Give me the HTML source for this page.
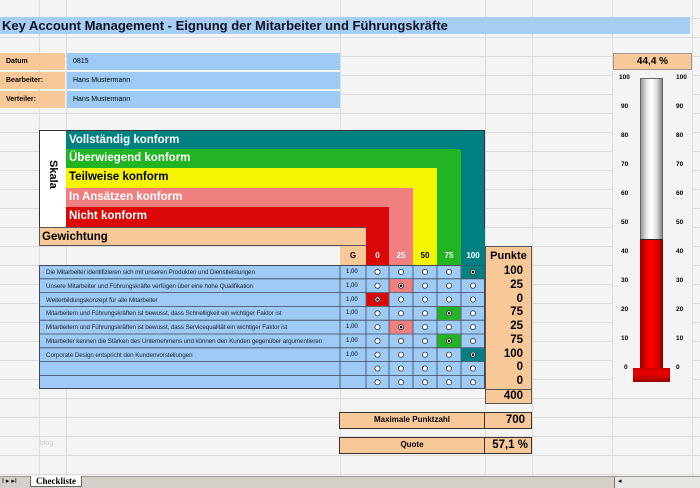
<!DOCTYPE html><html><head><meta charset="utf-8"><style>
*{margin:0;padding:0;box-sizing:border-box}
body{width:700px;height:488px;overflow:hidden;position:relative;background:#f4f4f4;font-family:"Liberation Sans",Arial,sans-serif;
background-image:repeating-linear-gradient(to bottom,transparent 0,transparent 18px,#dcdcdc 18px,#dcdcdc 19px);}
.a{position:absolute}
.vl{position:absolute;top:0;height:476px;width:1px;background:#dcdcdc}
.b{font-weight:bold}
.bar{position:absolute;left:66px;color:#fff;font-weight:bold;font-size:11.5px;padding-left:3px;line-height:19px}
.t{font-size:6.3px;color:#223;position:absolute;left:46px;letter-spacing:-.1px}
.g{font-size:6px;position:absolute;left:346px}
.p{position:absolute;left:485px;width:47px;text-align:right;padding-right:9px;font-weight:bold;font-size:11.5px}
.sl{position:absolute;font-size:6.5px;font-weight:bold}
</style></head><body>
<div class="vl" style="left:39px"></div><div class="vl" style="left:66px"></div><div class="vl" style="left:340px"></div><div class="vl" style="left:485px"></div><div class="vl" style="left:532px"></div><div class="vl" style="left:612px"></div><div class="vl" style="left:692px"></div>
<div class="a b" style="left:0;top:17px;width:690px;height:17px;background:#a6cdf4;font-size:13px;padding-left:2px;line-height:17px;color:#112">Key Account Management - Eignung der Mitarbeiter und Führungskräfte</div>
<div class="a b" style="left:0;top:53px;width:65px;height:17px;background:#f8c898;font-size:7px;padding:5px 6px">Datum</div>
<div class="a b" style="left:0;top:72px;width:65px;height:17px;background:#f8c898;font-size:7px;padding:5px 6px">Bearbeiter:</div>
<div class="a b" style="left:0;top:91px;width:65px;height:17px;background:#f8c898;font-size:7px;padding:5px 6px">Verteiler:</div>
<div class="a" style="left:67px;top:53px;width:273px;height:17px;background:#9dcbf5;font-size:7px;padding:5px 6px">0815</div>
<div class="a" style="left:67px;top:72px;width:273px;height:17px;background:#9dcbf5;font-size:7px;padding:5px 6px">Hans Mustermann</div>
<div class="a" style="left:67px;top:91px;width:273px;height:17px;background:#9dcbf5;font-size:7px;padding:5px 6px">Hans Mustermann</div>
<div class="a" style="left:39px;top:130px;width:27px;height:98px;background:#fff;border:1px solid #333;border-right:none"></div>
<div class="a b" style="left:40px;top:160px;width:26px;font-size:11px;writing-mode:vertical-rl;line-height:26px">Skala</div>
<div class="bar" style="top:130px;width:419px;height:98px;background:#008080;border-top:1px solid #333;border-right:1px solid #333">Vollständig konform</div>
<div class="bar" style="top:149px;width:395px;height:79px;background:#22b422">Überwiegend konform</div>
<div class="bar" style="top:168px;width:371px;height:60px;background:#f5f500;color:#000">Teilweise konform</div>
<div class="bar" style="top:188px;width:347px;height:40px;background:#f08080">In Ansätzen konform</div>
<div class="bar" style="top:207px;width:323px;height:21px;background:#dc0808">Nicht konform</div>
<div class="a b" style="left:39px;top:227px;width:327px;height:19px;background:#f8c898;border:1px solid #555;border-right:none;font-size:11.5px;padding-left:2px;line-height:18px">Gewichtung</div>
<div class="a" style="left:366px;top:228px;width:23px;height:18px;background:#dc0808"></div>
<div class="a" style="left:389px;top:228px;width:24px;height:18px;background:#f08080"></div>
<div class="a" style="left:413px;top:228px;width:24px;height:18px;background:#f5f500"></div>
<div class="a" style="left:437px;top:228px;width:24px;height:18px;background:#22b422"></div>
<div class="a" style="left:461px;top:228px;width:24px;height:18px;background:#008080"></div>
<div class="a b" style="top:246px;left:340px;width:26px;height:19px;background:#f8c898;font-size:8px;text-align:center;line-height:19px">G</div>
<div class="a b" style="top:246px;left:366px;width:23px;height:19px;background:#dc0808;color:#fff;font-size:8px;text-align:center;line-height:19px">0</div>
<div class="a b" style="top:246px;left:389px;width:24px;height:19px;background:#f08080;color:#fff;font-size:8px;text-align:center;line-height:19px">25</div>
<div class="a b" style="top:246px;left:413px;width:24px;height:19px;background:#f5f500;font-size:8px;text-align:center;line-height:19px">50</div>
<div class="a b" style="top:246px;left:437px;width:24px;height:19px;background:#22b422;color:#fff;font-size:8px;text-align:center;line-height:19px">75</div>
<div class="a b" style="top:246px;left:461px;width:24px;height:19px;background:#008080;color:#fff;font-size:8px;text-align:center;line-height:19px">100</div>
<div class="a b" style="top:246px;left:485px;width:47px;height:158px;background:#f8c898;border:1px solid #555;font-size:11px;text-align:center;line-height:18px">Punkte</div>
<div class="a" style="left:39px;top:265px;width:446px;height:124px;background:#9dcbf5;border:1px solid #445"></div>
<svg class="a" style="left:39px;top:265px" width="446" height="124">
<g stroke="#445" stroke-width="0.8">
<line x1="0" x2="446" y1="13.8" y2="13.8"/><line x1="0" x2="446" y1="27.6" y2="27.6"/><line x1="0" x2="446" y1="41.4" y2="41.4"/><line x1="0" x2="446" y1="55.2" y2="55.2"/><line x1="0" x2="446" y1="69" y2="69"/><line x1="0" x2="446" y1="82.8" y2="82.8"/><line x1="0" x2="446" y1="96.6" y2="96.6"/><line x1="0" x2="446" y1="110.4" y2="110.4"/>
<line x1="301" x2="301" y1="0" y2="124"/><line x1="327" x2="327" y1="0" y2="124"/><line x1="350" x2="350" y1="0" y2="124"/><line x1="374" x2="374" y1="0" y2="124"/><line x1="398" x2="398" y1="0" y2="124"/><line x1="422" x2="422" y1="0" y2="124"/></g>
<rect x="422.5" y="0.5" width="23" height="13" fill="#008080"/>
<rect x="350.5" y="14.2" width="23" height="13" fill="#f08080"/>
<rect x="327.5" y="28" width="22" height="13" fill="#dc0808"/>
<rect x="398.5" y="41.8" width="23" height="13" fill="#22b422"/>
<rect x="350.5" y="55.6" width="23" height="13" fill="#f08080"/>
<rect x="398.5" y="69.4" width="23" height="13" fill="#22b422"/>
<rect x="422.5" y="83.2" width="23" height="13" fill="#008080"/>
<g fill="#fff" stroke="#333" stroke-width="0.8">
<g id="r"><circle cx="338.5" cy="6.9" r="2.6"/><circle cx="362" cy="6.9" r="2.6"/><circle cx="386" cy="6.9" r="2.6"/><circle cx="410" cy="6.9" r="2.6"/><circle cx="434" cy="6.9" r="2.6"/></g>
<use href="#r" y="13.8"/><use href="#r" y="27.6"/><use href="#r" y="41.4"/><use href="#r" y="55.2"/><use href="#r" y="69"/><use href="#r" y="82.8"/><use href="#r" y="96.6"/><use href="#r" y="110.4"/></g>
<g fill="#111"><circle cx="434" cy="6.9" r="1.3"/><circle cx="362" cy="20.7" r="1.3"/><circle cx="338.5" cy="34.5" r="1.3"/><circle cx="410" cy="48.3" r="1.3"/><circle cx="362" cy="62.1" r="1.3"/><circle cx="410" cy="75.9" r="1.3"/><circle cx="434" cy="89.7" r="1.3"/></g>
</svg>
<div class="t" style="top:269px">Die Mitarbeiter identifizieren sich mit unseren Produkten und Dienstleistungen</div>
<div class="t" style="top:283px">Unsere Mitarbeiter und Führungskräfte verfügen über eine hohe Qualifikation</div>
<div class="t" style="top:297px">Weiterbildungskonzept für alle Mitarbeiter</div>
<div class="t" style="top:310px">Mitarbeitern und Führungskräften ist bewusst, dass Schnelligkeit ein wichtiger Faktor ist</div>
<div class="t" style="top:324px">Mitarbeitern und Führungskräften ist bewusst, dass Servicequalität ein wichtiger Faktor ist</div>
<div class="t" style="top:338px;width:294px;overflow:hidden;white-space:nowrap">Mitarbeiter kennen die Stärken des Unternehmens und können den Kunden gegenüber argumentieren</div>
<div class="t" style="top:352px">Corporate Design entspricht den Kundenvorstellungen</div>
<div class="g" style="top:269px">1,00</div><div class="g" style="top:283px">1,00</div><div class="g" style="top:297px">1,00</div><div class="g" style="top:310px">1,00</div><div class="g" style="top:324px">1,00</div><div class="g" style="top:338px">1,00</div><div class="g" style="top:352px">1,00</div>
<div class="p" style="top:265px">100</div><div class="p" style="top:279px">25</div><div class="p" style="top:293px">0</div><div class="p" style="top:306px">75</div><div class="p" style="top:320px">25</div><div class="p" style="top:334px">75</div><div class="p" style="top:348px">100</div><div class="p" style="top:361px">0</div><div class="p" style="top:375px">0</div>
<div class="a" style="left:485px;top:389px;width:47px;height:1px;background:#555"></div>
<div class="p" style="top:390px">400</div>
<div class="a b" style="left:339px;top:412px;width:146px;height:17px;background:#f8c898;border:1.5px solid #333;font-size:8px;text-align:center;line-height:14px">Maximale Punktzahl</div>
<div class="a b" style="left:484px;top:412px;width:48px;height:17px;background:#f8c898;border:1.5px solid #333;font-size:11.5px;text-align:right;padding-right:6px;line-height:14px">700</div>
<div class="a b" style="left:339px;top:437px;width:146px;height:17px;background:#f8c898;border:1.5px solid #333;font-size:8px;text-align:center;line-height:14px">Quote</div>
<div class="a b" style="left:484px;top:437px;width:48px;height:17px;background:#f8c898;border:1.5px solid #333;font-size:11.5px;text-align:right;padding-right:3px;line-height:14px">57,1 %</div>
<div class="a" style="left:40px;top:440px;font-size:7px;color:#ccc">blog</div>
<div class="a b" style="left:613px;top:53px;width:79px;height:17px;background:#f8c898;border:1px solid #999;font-size:10px;text-align:center;line-height:15px">44,4 %</div>
<div class="a" style="left:613px;top:70px;width:79px;height:316px;background:#f4f4f4"></div>
<div class="a" style="left:640px;top:78px;width:23px;height:162px;background:linear-gradient(to right,#999,#eee 30%,#fff 50%,#ddd 75%,#888);border:1px solid #666;border-bottom:none"></div>
<div class="a" style="left:640px;top:239px;width:23px;height:130px;background:linear-gradient(to right,#900,#e00 30%,#f00 50%,#d00 75%,#800);border-top:1px solid #222"></div>
<div class="a" style="left:633px;top:368px;width:37px;height:14px;background:linear-gradient(to bottom,#c00,#e00 40%,#900)"></div>
<div class="sl" style="left:619px;top:74px">100</div><div class="sl" style="left:676px;top:74px">100</div>
<div class="sl" style="left:621px;top:103px">90</div><div class="sl" style="left:676px;top:103px">90</div>
<div class="sl" style="left:621px;top:132px">80</div><div class="sl" style="left:676px;top:132px">80</div>
<div class="sl" style="left:621px;top:161px">70</div><div class="sl" style="left:676px;top:161px">70</div>
<div class="sl" style="left:621px;top:190px">60</div><div class="sl" style="left:676px;top:190px">60</div>
<div class="sl" style="left:621px;top:219px">50</div><div class="sl" style="left:676px;top:219px">50</div>
<div class="sl" style="left:621px;top:248px">40</div><div class="sl" style="left:676px;top:248px">40</div>
<div class="sl" style="left:621px;top:277px">30</div><div class="sl" style="left:676px;top:277px">30</div>
<div class="sl" style="left:621px;top:306px">20</div><div class="sl" style="left:676px;top:306px">20</div>
<div class="sl" style="left:621px;top:335px">10</div><div class="sl" style="left:676px;top:335px">10</div>
<div class="sl" style="left:624px;top:364px">0</div><div class="sl" style="left:676px;top:364px">0</div>
<div class="a" style="left:0;top:476px;width:700px;height:12px;background:#d4d0c8;border-top:1px solid #999"></div>
<div class="a" style="left:2px;top:477px;font-size:7px">I ▸ ▸I</div>
<div class="a" style="left:30px;top:476px;width:52px;height:11px;background:#fff;border:1px solid #666;border-top:none;font-family:'Liberation Serif',serif;font-weight:bold;font-size:9px;padding-left:5px;line-height:10px">Checkliste</div>
<div class="a" style="left:614px;top:477px;width:86px;height:11px;background:#e8e6e0;border-left:1px solid #777;font-size:7px;padding-left:3px">◂</div>
</body></html>
